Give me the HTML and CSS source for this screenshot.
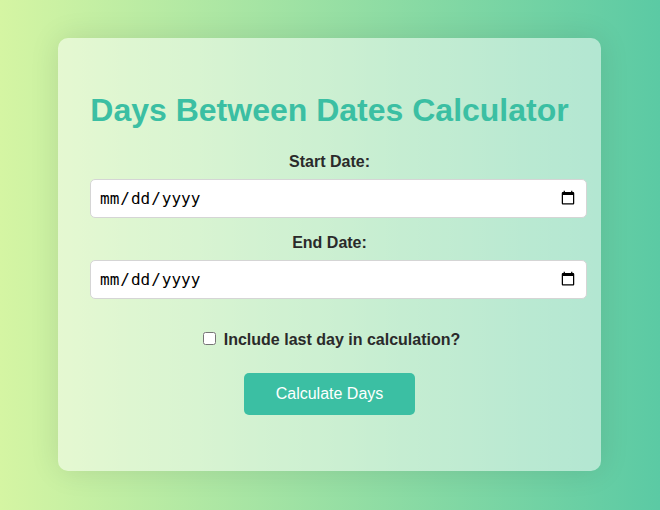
FILE: index.html
```html
<!DOCTYPE html>
<html lang="en">
<head>
<meta charset="UTF-8">
<title>Days Between Dates Calculator</title>
<link rel="stylesheet" href="styles.css">
</head>
<body>
<main class="container">
  <h1>Days Between Dates Calculator</h1>
  <label class="field-label" for="start">Start Date:</label>
  <input class="date" type="date" id="start">
  <label class="field-label" for="end">End Date:</label>
  <input class="date" type="date" id="end">
  <div class="option">
    <input type="checkbox" id="include">
    <label for="include">Include last day in calculation?</label>
  </div>
  <button type="button">Calculate Days</button>
</main>
</body>
</html>
```

FILE: styles.css
```css
body {
  margin: 0;
  height: 510px;
  display: flex;
  justify-content: center;
  align-items: flex-start;
  font-family: "Liberation Sans", Arial, sans-serif;
  color: #2a2a2a;
  background: linear-gradient(to right, #d5f5a3, #5bcaa4);
}
.container {
  box-sizing: border-box;
  width: 543px;
  height: 433px;
  margin: 38px 1px 0 0;
  padding: 32px;
  border-radius: 10px;
  background: rgba(255, 255, 255, 0.5);
  box-shadow: 0 0 30px rgba(0, 0, 0, 0.1);
  text-align: center;
}
h1 {
  margin: 22px 0 24px;
  font-size: 32px;
  line-height: 37px;
  white-space: nowrap;
  color: #3bbfa3;
}
.field-label {
  display: block;
  height: 18px;
  line-height: 18px;
  margin-bottom: 8px;
  font-weight: bold;
}
.date {
  display: block;
  box-sizing: border-box;
  width: 497px;
  height: 39px;
  margin: 0 0 16px;
  padding: 7px 8px 8px;
  border: 1px solid #d5d5d5;
  border-radius: 5px;
  background: #fff;
  color: #000;
  font-family: "DejaVu Sans Mono", monospace;
  font-size: 16px;
}
.option {
  display: flex;
  justify-content: center;
  align-items: flex-start;
  gap: 8px;
  height: 18px;
  line-height: 18px;
  margin: 32px 0 24px;
  padding-left: 4px;
  font-weight: bold;
}
.option input {
  width: 13px;
  height: 13px;
  margin: 1px 0 0;
}
button {
  display: block;
  width: 171px;
  height: 42px;
  margin: 0 auto;
  border: 0;
  border-radius: 5px;
  background: #3bbfa3;
  color: #fff;
  font: 16px "Liberation Sans", Arial, sans-serif;
}
```
